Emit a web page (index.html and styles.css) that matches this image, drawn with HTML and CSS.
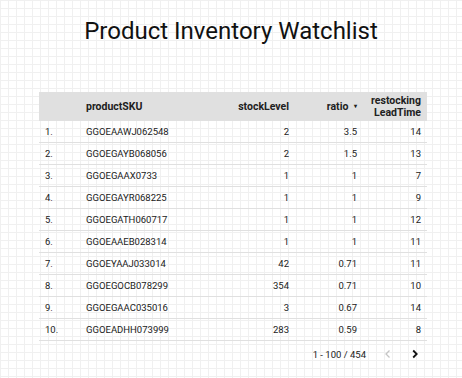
FILE: index.html
```html
<!DOCTYPE html>
<html>
<head>
<meta charset="utf-8">
<link rel="stylesheet" href="styles.css">
</head>
<body>
<div class="page">
  <h1 class="title">Product Inventory Watchlist</h1>
  <div class="table">
    <div class="row head">
      <div class="c idx"></div>
      <div class="c sku">productSKU</div>
      <div class="c num stock">stockLevel</div>
      <div class="c num ratio">ratio <span class="sort">▾</span></div>
      <div class="c num lead">restocking<br>LeadTime</div>
    </div>
    <div class="row"><div class="c idx">1.</div><div class="c sku">GGOEAAWJ062548</div><div class="c num stock">2</div><div class="c num ratio">3.5</div><div class="c num lead">14</div></div>
    <div class="row"><div class="c idx">2.</div><div class="c sku">GGOEGAYB068056</div><div class="c num stock">2</div><div class="c num ratio">1.5</div><div class="c num lead">13</div></div>
    <div class="row"><div class="c idx">3.</div><div class="c sku">GGOEGAAX0733</div><div class="c num stock">1</div><div class="c num ratio">1</div><div class="c num lead">7</div></div>
    <div class="row"><div class="c idx">4.</div><div class="c sku">GGOEGAYR068225</div><div class="c num stock">1</div><div class="c num ratio">1</div><div class="c num lead">9</div></div>
    <div class="row"><div class="c idx">5.</div><div class="c sku">GGOEGATH060717</div><div class="c num stock">1</div><div class="c num ratio">1</div><div class="c num lead">12</div></div>
    <div class="row"><div class="c idx">6.</div><div class="c sku">GGOEAAEB028314</div><div class="c num stock">1</div><div class="c num ratio">1</div><div class="c num lead">11</div></div>
    <div class="row"><div class="c idx">7.</div><div class="c sku">GGOEYAAJ033014</div><div class="c num stock">42</div><div class="c num ratio">0.71</div><div class="c num lead">11</div></div>
    <div class="row"><div class="c idx">8.</div><div class="c sku">GGOEGOCB078299</div><div class="c num stock">354</div><div class="c num ratio">0.71</div><div class="c num lead">10</div></div>
    <div class="row"><div class="c idx">9.</div><div class="c sku">GGOEGAAC035016</div><div class="c num stock">3</div><div class="c num ratio">0.67</div><div class="c num lead">14</div></div>
    <div class="row"><div class="c idx">10.</div><div class="c sku">GGOEADHH073999</div><div class="c num stock">283</div><div class="c num ratio">0.59</div><div class="c num lead">8</div></div>
    <div class="pager">
      <span class="range">1 - 100 / 454</span>
      <svg class="chev prev" width="12" height="12" viewBox="0 0 12 12"><path d="M7.5 2.5 L4 6 L7.5 9.5" fill="none" stroke="#c4c4c4" stroke-width="1.3"/></svg>
      <svg class="chev next" width="12" height="12" viewBox="0 0 12 12"><path d="M4.2 2.5 L7.7 6 L4.2 9.5" fill="none" stroke="#111" stroke-width="1.8"/></svg>
    </div>
  </div>
</div>
</body>
</html>
```
FILE: styles.css
```css
html, body {
  margin: 0;
  padding: 0;
}
body {
  width: 462px;
  height: 378px;
  background-color: #ffffff;
  background-image:
    linear-gradient(to right, #f0f0f0 1px, transparent 1px),
    linear-gradient(to bottom, #f0f0f0 1px, transparent 1px);
  background-size: 8px 8px;
  background-position: 0 0;
  font-family: Roboto, "Liberation Sans", sans-serif;
  color: #212121;
  overflow: hidden;
}
.page {
  display: flex;
  flex-direction: column;
  align-items: center;
}
.title {
  margin: 15px 0 0 0;
  font-size: 24px;
  font-weight: 400;
  line-height: 32px;
  color: #111;
  letter-spacing: 0;
}
.table {
  margin-top: 45px;
  margin-left: 4px;
  width: 388px;
  font-size: 9.5px;
}
.row {
  display: flex;
  align-items: center;
  height: 21px;
  border-bottom: 1px solid #e0e0e0;
}
.row.head {
  height: 29px;
  background: #e0e0e0;
  border-bottom: none;
  font-weight: 700;
  font-size: 10.5px;
  line-height: 12px;
  color: #212121;
}
.c {
  flex: none;
}
.idx {
  width: 47px;
  padding-left: 6px;
  box-sizing: border-box;
}
.sku {
  width: 100px;
}
.num {
  text-align: right;
}
.stock {
  width: 103px;
}
.ratio {
  width: 68px;
}
.lead {
  width: 64px;
}
.sort {
  font-size: 6px;
  display: inline-block;
  margin-left: 3px;
  vertical-align: 2px;
}
.pager {
  display: flex;
  align-items: center;
  justify-content: flex-end;
  height: 26px;
  font-size: 9.5px;
  color: #212121;
}
.range {
  margin-right: 16px;
}
.chev {
  display: block;
}
.prev {
  margin-right: 15px;
}
.next {
  margin-right: 6px;
}
```
